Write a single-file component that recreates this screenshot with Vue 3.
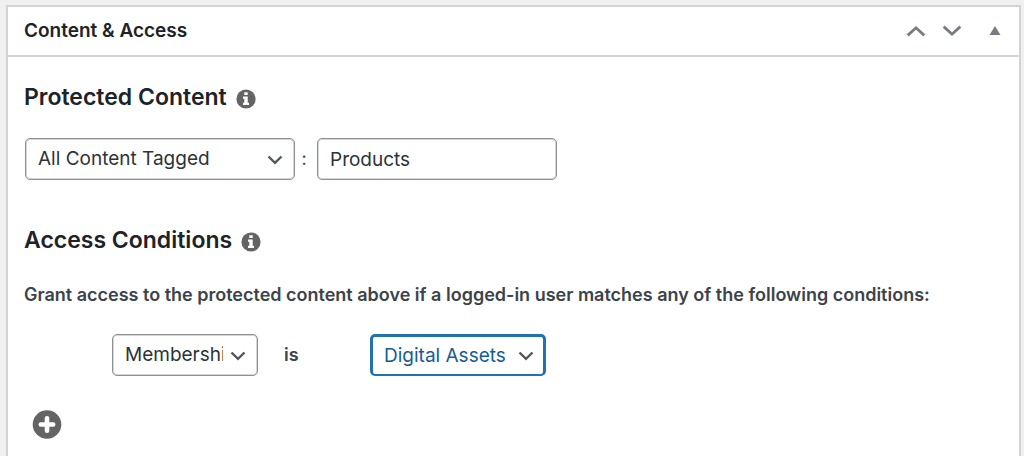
<script setup>
import { ref } from 'vue'

const scope = ref('tagged')
const tag = ref('Products')
const conditionType = ref('membership')
const conditionValue = ref('digital-assets')
</script>

<template>
  <main class="page">
    <section class="postbox">
      <header class="postbox-header">
        <h2 class="postbox-title">Content &amp; Access</h2>
        <div class="actions">
          <button type="button" class="action" aria-label="Move up">
            <svg width="20" height="12" viewBox="0 0 20 12"><path d="M1.700 10.400 10 2.800l8.300 7.600" fill="none" stroke="currentColor" stroke-width="2.800" /></svg>
          </button>
          <button type="button" class="action" aria-label="Move down">
            <svg width="20" height="12" viewBox="0 0 20 12"><path d="M1.700 1.600 10 9.200l8.300-7.600" fill="none" stroke="currentColor" stroke-width="2.800" /></svg>
          </button>
          <button type="button" class="action toggle" aria-label="Toggle panel">
            <svg width="12" height="10" viewBox="0 0 12 10"><path d="M6 0 11.500 9H0.500z" fill="currentColor" /></svg>
          </button>
        </div>
      </header>

      <div class="inside">
        <h3 class="heading">
          Protected Content
          <svg class="info" width="20" height="20" viewBox="0 0 20 20" role="img" aria-label="Info">
            <circle cx="10" cy="10" r="9.600" fill="#646464" />
            <path d="M8.300 3.200h3.400v2.800H8.300zM7 7.500h4.700v6.300H13v2.300H7v-2.300h1.300V9.800H7z" fill="#fff" />
          </svg>
        </h3>

        <div class="row rule">
          <div class="select-wrap scope">
            <select v-model="scope" aria-label="Protected content type">
              <option value="tagged">All Content Tagged</option>
              <option value="all">All Content</option>
            </select>
            <svg class="chevron" width="16" height="10" viewBox="0 0 16 10"><path d="m1.500 1.500 6.500 6.300 6.500-6.300" /></svg>
          </div>
          <span class="colon">:</span>
          <input v-model="tag" class="tag" type="text" aria-label="Tag" />
        </div>

        <h3 class="heading">
          Access Conditions
          <svg class="info" width="20" height="20" viewBox="0 0 20 20" role="img" aria-label="Info">
            <circle cx="10" cy="10" r="9.600" fill="#646464" />
            <path d="M8.300 3.200h3.400v2.800H8.300zM7 7.500h4.700v6.300H13v2.300H7v-2.300h1.300V9.800H7z" fill="#fff" />
          </svg>
        </h3>

        <p class="description">Grant access to the protected content above if a logged-in user matches any of the following conditions:</p>

        <div class="row condition">
          <div class="select-wrap type">
            <select v-model="conditionType" aria-label="Condition type">
              <option value="membership">Membership</option>
              <option value="role">Role</option>
            </select>
            <svg class="chevron" width="16" height="10" viewBox="0 0 16 10"><path d="m1.500 1.500 6.500 6.300 6.500-6.300" /></svg>
          </div>
          <span class="operator">is</span>
          <div class="select-wrap value">
            <select v-model="conditionValue" class="active" aria-label="Condition value">
              <option value="digital-assets">Digital Assets</option>
            </select>
            <svg class="chevron" width="16" height="10" viewBox="0 0 16 10"><path d="m1.500 1.500 6.500 6.300 6.500-6.300" /></svg>
          </div>
        </div>

        <button type="button" class="add" aria-label="Add condition">
          <svg width="30" height="30" viewBox="0 0 30 30">
            <circle cx="15" cy="14.500" r="14.300" fill="#646464" />
            <path d="M15 8.300v12.400M8.800 14.500h12.400" stroke="#fff" stroke-width="4.600" stroke-linecap="round" />
          </svg>
        </button>
      </div>
    </section>
  </main>
</template>

<style>
body {
  background: #f0f0f1;
}
</style>

<style scoped>
.page {
  box-sizing: border-box;
  min-height: 100vh;
  display: flex;
  padding: 5px 3px 0 6px;
  font-family: Inter, "Liberation Sans", sans-serif;
  font-size: 18px;
  line-height: 24px;
  color: #3c434a;
}

.postbox {
  flex: 1;
  min-width: 0;
  background: #fff;
  border: 2px solid #d2d3d5;
  border-bottom: 0;
}

.postbox-header {
  display: flex;
  align-items: center;
  justify-content: space-between;
  height: 48px;
  padding: 0 18px 0 16px;
  border-bottom: 2px solid #d2d3d5;
}

.postbox-title {
  margin: 0;
  font-size: 19px;
  font-weight: 600;
  color: #1d2327;
}

.actions {
  display: flex;
  align-items: center;
  gap: 16px;
}

.action {
  display: flex;
  padding: 0;
  border: 0;
  background: none;
  color: #787c82;
}

.toggle {
  margin-left: 11px;
}

.inside {
  padding: 24px 16px 16px;
}

.heading {
  display: flex;
  align-items: center;
  gap: 9px;
  margin: 0;
  font-size: 23px;
  font-weight: 600;
  line-height: 32px;
  color: #1d2327;
}

.info {
  margin-top: 4px;
}

.row {
  display: flex;
  align-items: center;
}

.rule {
  margin: 25px 0 44px 1px;
}

.select-wrap {
  display: grid;
  align-items: center;
}

.select-wrap > * {
  grid-area: 1 / 1;
}

.chevron {
  justify-self: end;
  margin: 2px 12px 0 0;
  fill: none;
  stroke: #50575e;
  stroke-width: 2.4;
  pointer-events: none;
}

select,
.tag {
  box-sizing: border-box;
  width: 100%;
  height: 42px;
  margin: 0;
  padding: 0 34px 0 12px;
  appearance: none;
  border: 1px solid #8c8f94;
  border-radius: 5px;
  box-shadow: inset 0 0 0 1px #d5d6d8;
  background: #fff;
  font: inherit;
  font-size: 19px;
  color: #2c3338;
  outline: 0;
}

.scope {
  width: 270px;
}

.colon {
  width: 22px;
  padding-right: 4px;
  box-sizing: border-box;
  text-align: center;
}

.tag {
  width: 240px;
}

.description {
  margin: 27px 0;
  font-weight: 600;
}

.condition {
  margin-left: 88px;
}

.type {
  width: 146px;
}

.operator {
  width: 86px;
  padding-left: 26px;
  font-weight: 600;
}

.value {
  width: 176px;
}

select.active {
  padding-left: 11px;
  border: 3px solid #2271b1;
  border-bottom-width: 2px;
  box-shadow: none;
  color: #135e96;
}

.add {
  display: flex;
  margin: 34px 0 0 8px;
  padding: 0;
  border: 0;
  background: none;
}
</style>
